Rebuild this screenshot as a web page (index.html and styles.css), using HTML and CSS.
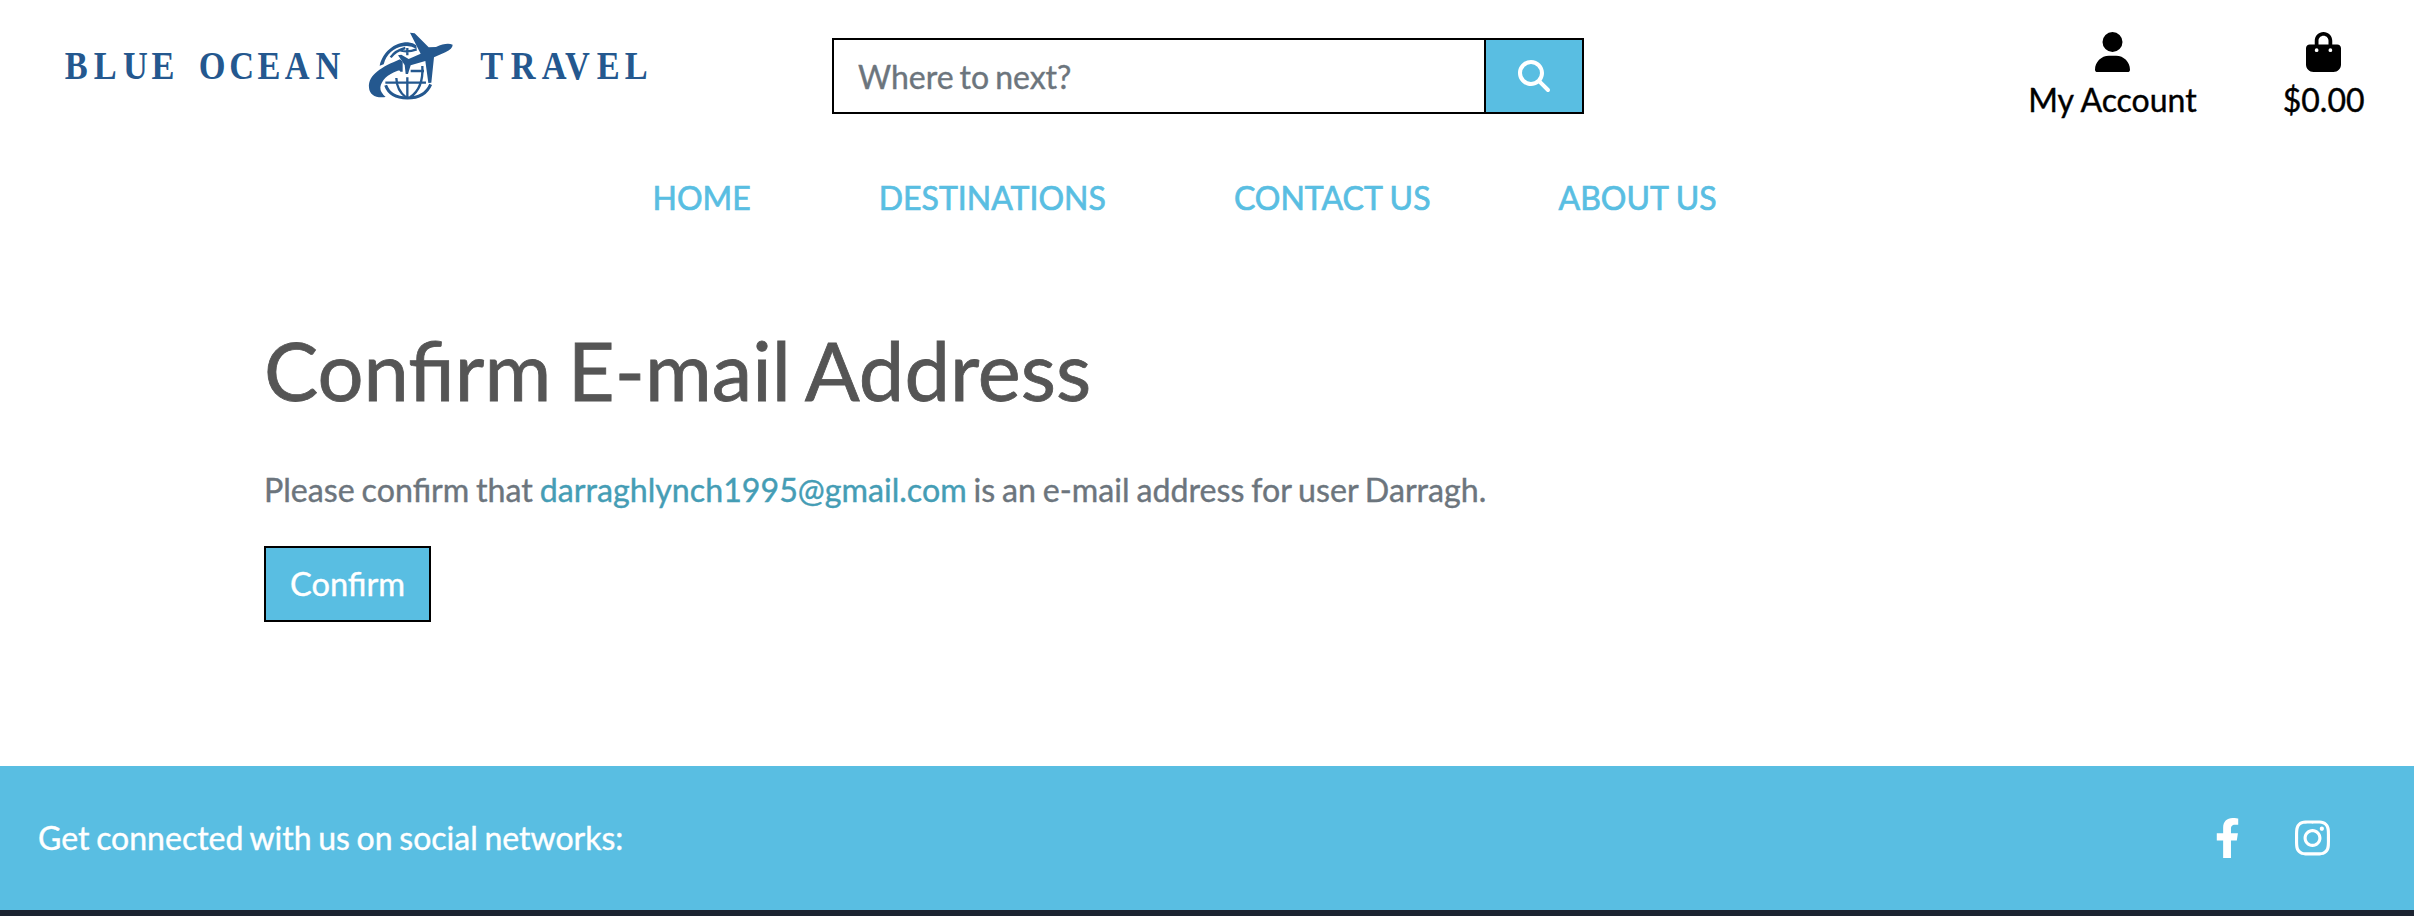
FILE: index.html
```html
<!DOCTYPE html>
<html lang="en">
<head>
<meta charset="utf-8">
<title>Blue Ocean Travel</title>
<link rel="stylesheet" href="styles.css">
</head>
<body>
<header class="header">
  <a class="brand">
    <svg class="brand-logo" width="600" height="90" viewBox="50 20 600 90">
      <g class="brand-text" transform="scale(.86 1)">
        <text y="79.5" x="75.300 109 143 176.300">BLUE</text>
        <text y="79.5" x="231 266.500 299.500 331 367">OCEAN</text>
        <text y="79.5" x="558.500 594 630 657 694 726.500">TRAVEL</text>
      </g>
      <g class="brand-globe" transform="translate(350 20) scale(.33333)">
        <path d="M89 137C98 96 134 66 174 67Q190 68 199 76L200 87Q185 78 171 78C140 78 116 95 105 121L101 133Z"/>
        <path d="M57 203C54 164 95 141 150 118L158 125V155L151 155Q150 150 143 152C112 163 94 181 91 202Q90 217 107 231C76 235 59 224 57 203Z"/>
        <path d="M180 38L194 40L236 82L258 81Q290 66 308 74Q308 86 286 97L252 112L244 188L235 189L226 123L182 136L174 162L167 162L164 135L144 106L154 104L176 117L212 101Z"/>
        <path class="line" d="M107 196C116 222 141 234 172 234C207 234 231 219 242 193"/>
        <path class="line thin" d="M106 188H228M182 153H222M172 84V106M172 172V232M122 112Q136 92 166 84M146 90Q171 99 200 88M217 138Q221 205 180 232M139 174Q140 211 168 232"/>
      </g>
    </svg>
  </a>
  <form class="search">
    <input class="search-input" type="text" placeholder="Where to next?">
    <button class="search-button" type="button" aria-label="Search">
      <svg width="32" height="32" viewBox="0 0 512 512" fill="currentColor"><path d="M416 208c0 45.9-14.9 88.3-40 122.7L502.6 457.4c12.5 12.5 12.5 32.8 0 45.3s-32.8 12.5-45.3 0L330.7 376c-34.4 25.2-76.8 40-122.7 40C93.1 416 0 322.9 0 208S93.1 0 208 0S416 93.1 416 208zM208 352a144 144 0 1 0 0-288 144 144 0 1 0 0 288z"/></svg>
    </button>
  </form>
  <div class="account">
    <a class="account-link">
      <svg width="35" height="40" viewBox="0 0 448 512"><path d="M224 256A128 128 0 1 0 224 0a128 128 0 1 0 0 256zm-45.7 48C79.8 304 0 383.8 0 482.3C0 498.7 13.3 512 29.7 512H418.3c16.4 0 29.7-13.3 29.7-29.7C448 383.8 368.2 304 269.7 304H178.3z"/></svg>
      <span>My Account</span>
    </a>
    <a class="account-link">
      <svg width="35" height="40" viewBox="0 0 448 512"><path d="M160 112c0-35.3 28.7-64 64-64s64 28.7 64 64v48H160V112zm-48 48H48c-26.5 0-48 21.5-48 48V416c0 53 43 96 96 96H352c53 0 96-43 96-96V208c0-26.5-21.5-48-48-48H336V112C336 50.1 285.9 0 224 0S112 50.1 112 112v48zm24 48a24 24 0 1 1 0 48 24 24 0 1 1 0-48zm152 24a24 24 0 1 1 48 0 24 24 0 1 1 -48 0z"/></svg>
      <span>$0.00</span>
    </a>
  </div>
</header>
<nav class="nav">
  <a>HOME</a>
  <a>DESTINATIONS</a>
  <a>CONTACT US</a>
  <a>ABOUT US</a>
</nav>
<main class="content">
  <h1 class="title">Confirm E-mail Address</h1>
  <p class="message">Please confirm that <a class="email">darraghlynch1995@gmail.com</a> is an e-mail address for user Darragh.</p>
  <button class="confirm" type="button">Confirm</button>
</main>
<footer class="footer">
  <div class="social">
    <span>Get connected with us on social networks:</span>
    <div class="social-icons">
      <svg width="25" height="40" viewBox="0 0 320 512" fill="currentColor"><path d="M279.14 288l14.22-92.66h-88.91v-60.13c0-25.35 12.42-50.06 52.24-50.06h40.42V6.26S260.43 0 225.36 0c-73.22 0-121.08 44.38-121.08 124.72v70.62H22.89V288h81.39v224h100.17V288z"/></svg>
      <svg width="35" height="40" viewBox="0 0 448 512" fill="currentColor"><path d="M224.1 141c-63.6 0-114.9 51.3-114.9 114.9s51.3 114.9 114.9 114.9S339 319.5 339 255.9 287.7 141 224.1 141zm0 189.600c-41.100 0-74.700-33.500-74.700-74.700s33.500-74.700 74.700-74.700 74.700 33.500 74.700 74.700-33.600 74.700-74.700 74.700zm146.400-194.300c0 14.900-12 26.800-26.800 26.800-14.900 0-26.800-12-26.800-26.800s12-26.800 26.800-26.800 26.800 12 26.800 26.800zm76.100 27.200c-1.700-35.900-9.900-67.700-36.200-93.900-26.200-26.200-58-34.400-93.900-36.200-37-2.100-147.900-2.100-184.900 0-35.800 1.700-67.600 9.900-93.900 36.100s-34.400 58-36.200 93.900c-2.100 37-2.100 147.900 0 184.900 1.700 35.900 9.900 67.700 36.200 93.900s58 34.400 93.900 36.200c37 2.100 147.900 2.100 184.900 0 35.900-1.700 67.700-9.900 93.900-36.200 26.200-26.200 34.400-58 36.200-93.900 2.100-37 2.100-147.800 0-184.800zM398.800 388c-7.800 19.600-22.900 34.700-42.600 42.600-29.500 11.700-99.500 9-132.100 9s-102.700 2.600-132.100-9c-19.600-7.800-34.700-22.900-42.600-42.600-11.700-29.500-9-99.500-9-132.100s-2.600-102.700 9-132.100c7.800-19.600 22.900-34.700 42.600-42.600 29.500-11.700 99.500-9 132.100-9s102.700-2.600 132.100 9c19.600 7.800 34.700 22.900 42.600 42.600 11.700 29.500 9 99.500 9 132.100s2.700 102.700-9 132.100z"/></svg>
    </div>
  </div>
</footer>
</body>
</html>
```
FILE: styles.css
```css
* {
  box-sizing: border-box;
}

body {
  margin: 0;
  height: 916px;
  overflow: hidden;
  display: flex;
  flex-direction: column;
  background: #fff;
  color: #000;
  font: 400 32px/48px Lato, sans-serif;
  -webkit-text-stroke: 0.4px currentColor;
}

.header {
  display: grid;
  grid-template-columns: 782px 752px 1fr;
  height: 174px;
  padding: 20px 49.5px 0 50px;
}

.brand-logo {
  display: block;
  -webkit-text-stroke: 0;
}

.brand-text {
  font: bold 40px "Liberation Serif", serif;
  fill: #24588f;
}

.brand-globe {
  fill: #24588f;
}

.line {
  fill: none;
  stroke: #24588f;
  stroke-width: 9;
}

.thin {
  stroke-width: 7;
}

.search {
  display: flex;
  height: 76px;
  margin-top: 18px;
}

.search-input {
  flex: 1;
  min-width: 0;
  padding: 13px 24px 11px;
  border: 2px solid #000;
  border-right: 0;
  background: #fff;
  font: inherit;
  word-spacing: -2.2px;
}

.search-input::placeholder {
  color: #6c757d;
  opacity: 1;
}

.search-button {
  display: flex;
  align-items: center;
  justify-content: center;
  width: 100px;
  padding: 0;
  border: 2px solid #000;
  background: #59bee2;
  color: #fff;
}

.account {
  display: flex;
  justify-content: flex-end;
  gap: 86px;
  padding-top: 12px;
}

.account-link {
  display: flex;
  flex-direction: column;
  align-items: center;
  gap: 4px;
}

.nav {
  display: flex;
  gap: 128px;
  height: 48px;
  padding-left: 652.5px;
  color: #59bee2;
  word-spacing: -0.5px;
  -webkit-text-stroke-width: 0.7px;
}

.content {
  padding: 100px 264px 0;
  height: 544px;
}

.title {
  margin: 0 0 48px;
  color: #555;
  font-size: 81.3px;
  font-weight: 400;
  line-height: 96px;
  word-spacing: -4.3px;
  -webkit-text-stroke-width: 0.8px;
}

.message {
  margin: 0 0 32px;
  color: #6c757d;
  font-size: 32.2px;
  word-spacing: -1.4px;
}

.email {
  color: #459db5;
}

.confirm {
  display: block;
  height: 76px;
  padding: 12px 24px;
  border: 2px solid #000;
  background: #59bee2;
  color: #fff;
  font: inherit;
  font-size: 32.6px;
}

.footer {
  flex: 1;
  background: #1c2331;
}

.social {
  display: flex;
  justify-content: space-between;
  align-items: center;
  height: 144px;
  padding: 0 84px 0 38px;
  background: #59bee2;
  color: #fff;
  word-spacing: -1.5px;
}

.social-icons {
  display: flex;
  gap: 55px;
}
```
